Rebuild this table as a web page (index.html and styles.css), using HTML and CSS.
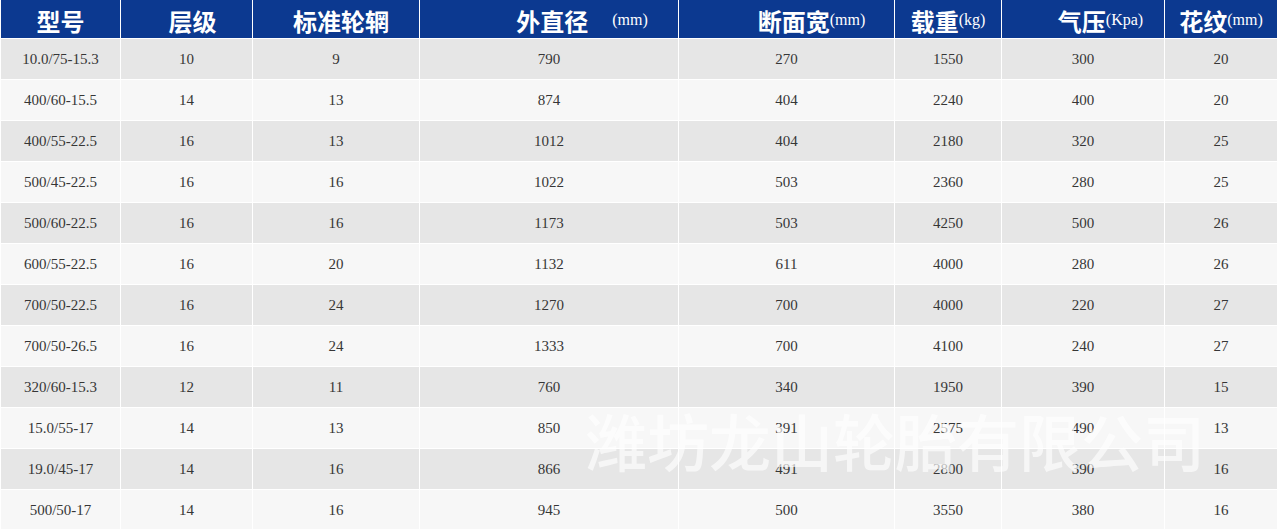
FILE: index.html
```html
<!DOCTYPE html>
<html lang="zh">
<head>
<meta charset="utf-8">
<title>轮胎规格表</title>
<link rel="stylesheet" href="styles.css">
</head>
<body>
<div class="sheet">
  <div class="table">
    <div class="row head">
      <div class="cell"><span class="hz">型号</span></div>
      <div class="cell pl12"><span class="hz">层级</span></div>
      <div class="cell pl10"><span class="hz">标准轮辋</span></div>
      <div class="cell pl66"><span class="hz">外直径　</span><span class="unit">(mm)</span></div>
      <div class="cell pl50"><span class="hz">断面宽</span><span class="unit">(mm)</span></div>
      <div class="cell"><span class="hz">载重</span><span class="unit">(kg)</span></div>
      <div class="cell pl35"><span class="hz">气压</span><span class="unit">(Kpa)</span></div>
      <div class="cell"><span class="hz">花纹</span><span class="unit">(mm)</span></div>
    </div>
    <div class="row odd"><div class="cell">10.0/75-15.3</div><div class="cell">10</div><div class="cell">9</div><div class="cell">790</div><div class="cell">270</div><div class="cell">1550</div><div class="cell">300</div><div class="cell">20</div></div>
    <div class="row even"><div class="cell">400/60-15.5</div><div class="cell">14</div><div class="cell">13</div><div class="cell">874</div><div class="cell">404</div><div class="cell">2240</div><div class="cell">400</div><div class="cell">20</div></div>
    <div class="row odd"><div class="cell">400/55-22.5</div><div class="cell">16</div><div class="cell">13</div><div class="cell">1012</div><div class="cell">404</div><div class="cell">2180</div><div class="cell">320</div><div class="cell">25</div></div>
    <div class="row even"><div class="cell">500/45-22.5</div><div class="cell">16</div><div class="cell">16</div><div class="cell">1022</div><div class="cell">503</div><div class="cell">2360</div><div class="cell">280</div><div class="cell">25</div></div>
    <div class="row odd"><div class="cell">500/60-22.5</div><div class="cell">16</div><div class="cell">16</div><div class="cell">1173</div><div class="cell">503</div><div class="cell">4250</div><div class="cell">500</div><div class="cell">26</div></div>
    <div class="row even"><div class="cell">600/55-22.5</div><div class="cell">16</div><div class="cell">20</div><div class="cell">1132</div><div class="cell">611</div><div class="cell">4000</div><div class="cell">280</div><div class="cell">26</div></div>
    <div class="row odd"><div class="cell">700/50-22.5</div><div class="cell">16</div><div class="cell">24</div><div class="cell">1270</div><div class="cell">700</div><div class="cell">4000</div><div class="cell">220</div><div class="cell">27</div></div>
    <div class="row even"><div class="cell">700/50-26.5</div><div class="cell">16</div><div class="cell">24</div><div class="cell">1333</div><div class="cell">700</div><div class="cell">4100</div><div class="cell">240</div><div class="cell">27</div></div>
    <div class="row odd"><div class="cell">320/60-15.3</div><div class="cell">12</div><div class="cell">11</div><div class="cell">760</div><div class="cell">340</div><div class="cell">1950</div><div class="cell">390</div><div class="cell">15</div></div>
    <div class="row even"><div class="cell">15.0/55-17</div><div class="cell">14</div><div class="cell">13</div><div class="cell">850</div><div class="cell">391</div><div class="cell">2575</div><div class="cell">490</div><div class="cell">13</div></div>
    <div class="row odd"><div class="cell">19.0/45-17</div><div class="cell">14</div><div class="cell">16</div><div class="cell">866</div><div class="cell">491</div><div class="cell">2800</div><div class="cell">390</div><div class="cell">16</div></div>
    <div class="row even"><div class="cell">500/50-17</div><div class="cell">14</div><div class="cell">16</div><div class="cell">945</div><div class="cell">500</div><div class="cell">3550</div><div class="cell">380</div><div class="cell">16</div></div>
  </div>
  <div class="watermark">潍坊龙山轮胎有限公司</div>
</div>
</body>
</html>
```
FILE: styles.css
```css
html, body {
  margin: 0;
  padding: 0;
  background: #ffffff;
}
body {
  width: 1277px;
  height: 529px;
  overflow: hidden;
}
.sheet {
  position: relative;
  width: 1277px;
}
.table {
  display: flex;
  flex-direction: column;
  gap: 1px;
  background: #ffffff;
}
.row {
  display: grid;
  grid-template-columns: 119px 131px 166px 258px 215px 106px 162px 112px;
  column-gap: 1px;
  padding-left: 1px;
  height: 40px;
}
.row.head {
  height: 38px;
}
.cell {
  display: flex;
  align-items: center;
  justify-content: center;
  font-family: "Liberation Serif", "Times New Roman", serif;
  font-size: 15px;
  color: #363636;
  white-space: nowrap;
}
.row.odd .cell {
  background: #e6e6e6;
}
.row.even .cell {
  background: #f7f7f7;
}
.row.head .cell {
  background: #0c3990;
  color: #ffffff;
  padding-top: 4px;
  box-sizing: border-box;
}
.hz {
  font-family: "Noto Sans CJK SC", "Noto Sans", sans-serif;
  font-weight: 700;
  font-size: 24px;
  line-height: 1;
}
.unit {
  font-family: "Liberation Serif", "Times New Roman", serif;
  font-size: 16px;
  line-height: 1;
  position: relative;
  top: -1px;
}
.pl10 { padding-left: 10px; }
.pl12 { padding-left: 12px; }
.pl35 { padding-left: 35px; }
.pl50 { padding-left: 50px; }
.pl66 { padding-left: 66px; }
.watermark {
  position: absolute;
  left: 585px;
  top: 409px;
  font-family: "Noto Sans CJK SC", "Noto Sans", sans-serif;
  font-weight: 500;
  font-size: 62px;
  line-height: 1;
  color: rgba(255, 255, 255, 0.65);
  white-space: nowrap;
  pointer-events: none;
}
```
